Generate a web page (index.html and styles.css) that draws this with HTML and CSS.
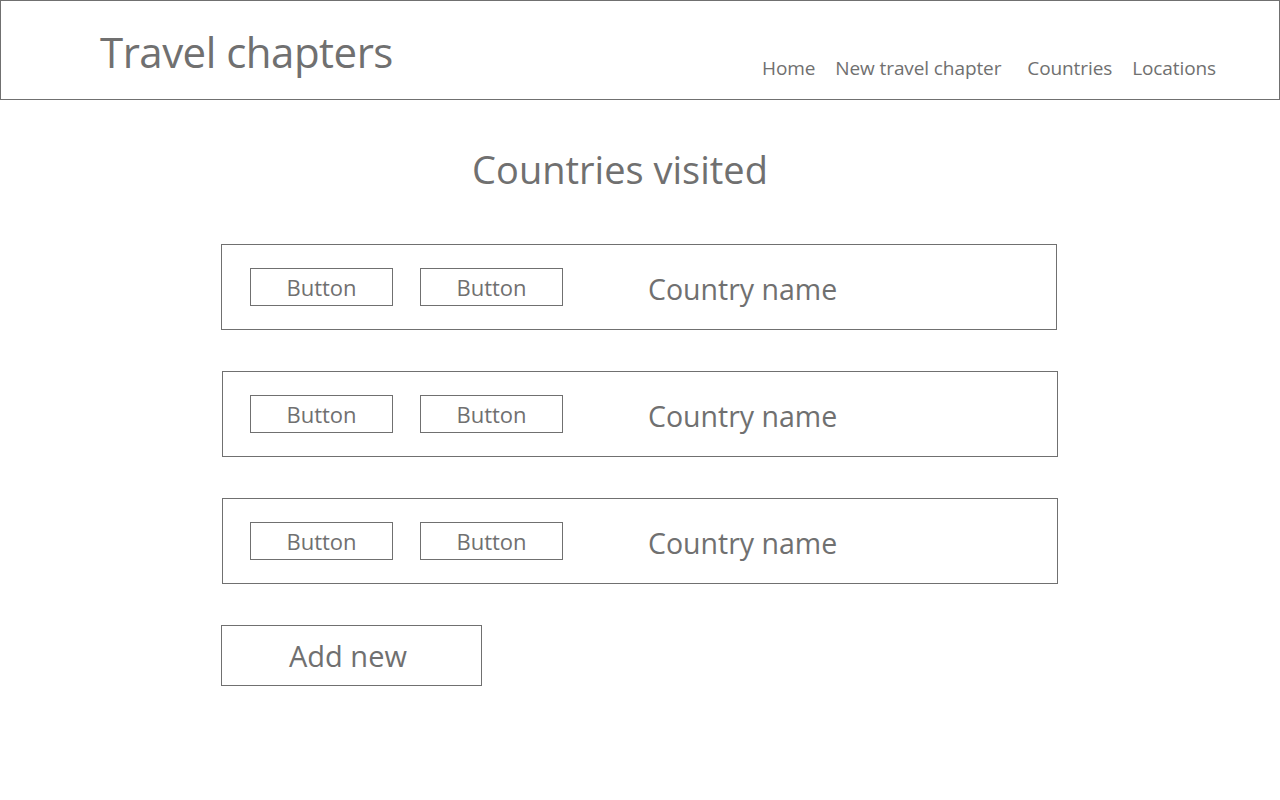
FILE: index.html
```html
<!DOCTYPE html>
<html>
<head>
<meta charset="utf-8">
<link rel="stylesheet" href="styles.css">
</head>
<body>
<header class="header">
  <h1 class="site-title">Travel chapters</h1>
  <nav class="nav">
    <a class="nav-link">Home</a>
    <a class="nav-link">New travel chapter</a>
    <a class="nav-link nav-link-wide">Countries</a>
    <a class="nav-link">Locations</a>
  </nav>
</header>
<main class="main">
  <h2 class="page-title">Countries visited</h2>
  <div class="list">
    <div class="row">
      <button class="btn">Button</button>
      <button class="btn">Button</button>
      <span class="country">Country name</span>
    </div>
    <div class="row row-shift">
      <button class="btn">Button</button>
      <button class="btn">Button</button>
      <span class="country">Country name</span>
    </div>
    <div class="row row-shift">
      <button class="btn">Button</button>
      <button class="btn">Button</button>
      <span class="country">Country name</span>
    </div>
    <button class="add-btn">Add new</button>
  </div>
</main>
</body>
</html>
```

FILE: styles.css
```css
* { box-sizing: border-box; }
html, body {
  margin: 0;
  padding: 0;
  background: #fff;
}
body {
  font-family: "Open Sans", "Noto Sans", sans-serif;
  color: #707070;
  width: 1280px;
  height: 800px;
}
.header {
  height: 100px;
  border: 1px solid #707070;
  display: flex;
  align-items: flex-start;
  justify-content: space-between;
  padding: 0 63px 0 99px;
}
.site-title {
  margin: 21px 0 0 0;
  font-weight: 400;
  font-size: 42px;
  line-height: 60px;
  letter-spacing: -0.5px;
}
.nav {
  display: flex;
  gap: 20px;
  margin-top: 53px;
}
.nav-link {
  font-size: 19px;
  line-height: 28px;
  letter-spacing: -0.1px;
}
.nav-link-wide { margin-left: 6px; }
.main {
  padding-top: 44px;
}
.page-title {
  margin: 0;
  width: 1240px;
  text-align: center;
  font-weight: 400;
  font-size: 38px;
  line-height: 50px;
}
.list {
  margin-top: 50px;
  margin-left: 221px;
  width: 837px;
  display: flex;
  flex-direction: column;
  gap: 41px;
  align-items: flex-start;
}
.row {
  width: 836px;
  height: 86px;
  border: 1px solid #707070;
  display: flex;
  align-items: flex-start;
  padding: 23px 28px 0 28px;
}
.row-shift {
  margin-left: 1px;
  padding-left: 27px;
}
.btn {
  width: 143px;
  height: 38px;
  border: 1px solid #707070;
  background: #fff;
  color: #707070;
  font-family: inherit;
  font-size: 22px;
  line-height: 34px;
  padding: 0;
  margin-right: 27px;
}
.country {
  margin-left: 58px;
  font-size: 28.5px;
  line-height: 42px;
}
.add-btn {
  width: 261px;
  height: 61px;
  border: 1px solid #707070;
  background: #fff;
  color: #707070;
  font-family: inherit;
  font-size: 29px;
  padding: 0 0 0 67px;
  text-align: left;
}
```
